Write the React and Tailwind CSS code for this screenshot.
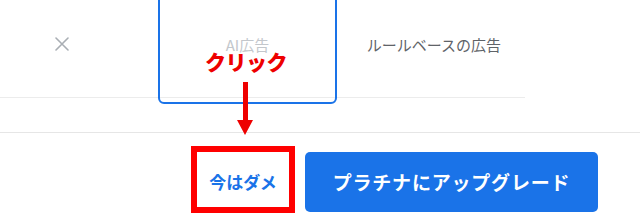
import React from "react";

const font = { fontFamily: '"Noto Sans CJK JP", "Noto Sans", sans-serif' };

const CloseIcon = () => (
  <svg width="14" height="14" viewBox="0 0 14 14" fill="none" stroke="#a9aeb4" strokeWidth="1.6" strokeLinecap="round">
    <path d="M1 1L13 13M13 1L1 13" />
  </svg>
);

const DownArrow = () => (
  <svg width="18" height="54" viewBox="0 0 18 54">
    <rect x="7" y="0" width="5" height="40" fill="#ee0000" />
    <path d="M1 38H17L9 53Z" fill="#ee0000" />
  </svg>
);

export default function App() {
  return (
    <div className="relative w-[640px] h-[220px] bg-white overflow-hidden" style={font}>
      {/* table head row */}
      <div className="flex w-[525px] h-[98px] border-b border-[#ececec]">
        <div className="w-[158px] pt-[37px] pl-[55px]">
          <CloseIcon />
        </div>
        <div className="relative w-[179px] pt-[32px] text-center">
          <div className="absolute left-0 right-0 -top-4 -bottom-[7px] border-2 border-[#1a73e8] rounded-[6px]" />
          <span className="text-[15px] leading-[22px] text-[#c3c7cc]">AI広告</span>
        </div>
        <div className="flex-1 pt-[32px] pl-[6px] text-center">
          <span className="text-[15px] leading-[22px] text-[#5f6368]">ルールベースの広告</span>
        </div>
      </div>

      {/* separator */}
      <div className="h-[35px] border-b border-[#e6e6e6]" />

      {/* footer buttons */}
      <div className="flex justify-end items-start gap-[10px] pt-[13px] pr-[42px]">
        <div className="w-[104px] h-[67px] border-[6px] border-[#ff0000] flex items-center justify-center">
          <span className="text-[17px] font-bold text-[#1a73e8] mt-[4px]">今はダメ</span>
        </div>
        <button className="w-[293px] h-[60px] mt-[6px] rounded-[5px] bg-[#1a73e8] text-white text-[19px] font-bold tracking-[0.8px]">
          プラチナにアップグレード
        </button>
      </div>

      {/* annotation */}
      <div className="absolute left-[205px] top-[46px] text-[21px] leading-[30px] font-black text-[#ee0000] tracking-[-0.5px]">
        クリック
      </div>
      <div className="absolute left-[236px] top-[82px]">
        <DownArrow />
      </div>
    </div>
  );
}
